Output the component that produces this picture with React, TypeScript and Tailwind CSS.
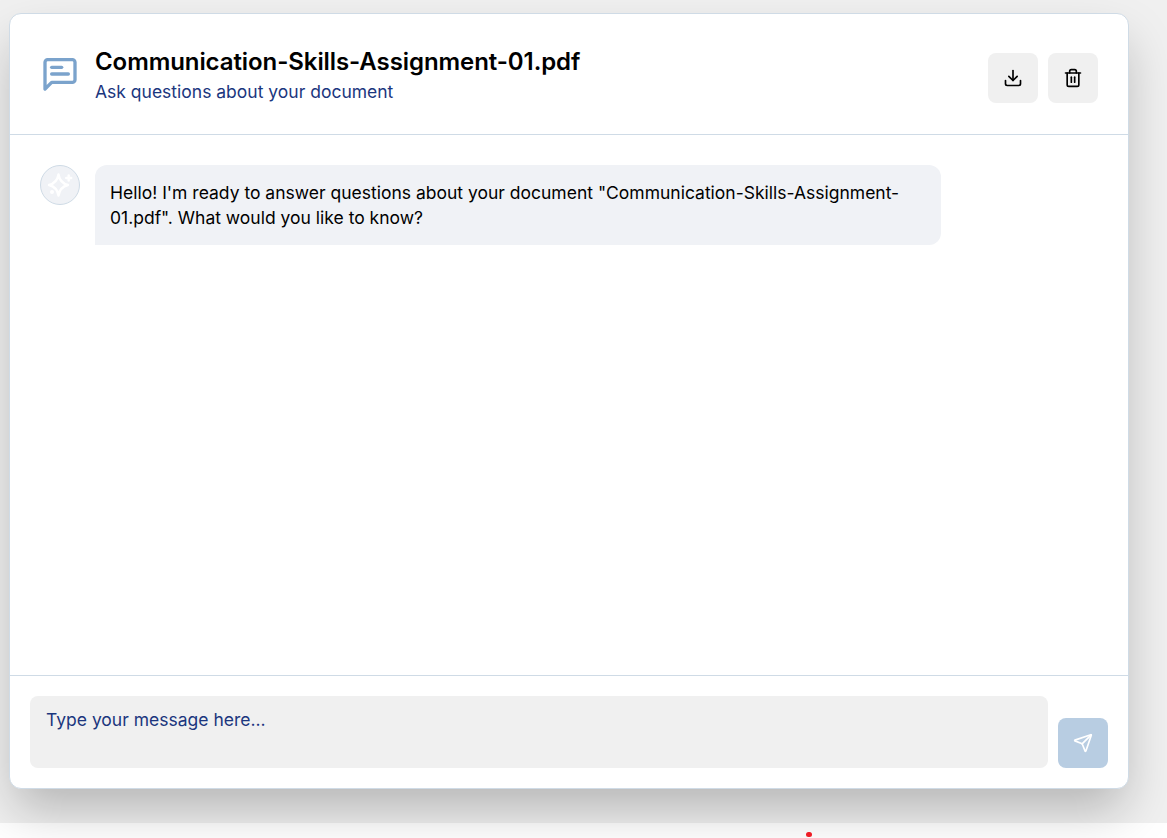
import { Download, Send, Trash2 } from "lucide-react"

function ChatIcon() {
  return (
    <svg viewBox="0 0 24 24" fill="none" stroke="#7ba3cc" strokeWidth="2" strokeLinecap="round" strokeLinejoin="round" className="h-10 w-10 shrink-0">
      <path d="M3 5a1.6 1.6 0 0 1 1.6-1.6h14.8A1.6 1.6 0 0 1 21 5v10.4a1.6 1.6 0 0 1-1.6 1.6H7l-4 4z" />
      <path d="M7 8h6" />
      <path d="M7 12h10" />
    </svg>
  )
}

function StarIcon() {
  return (
    <svg viewBox="0 0 38 38" fill="none" stroke="white" strokeWidth="2.4" strokeLinecap="round" strokeLinejoin="round" className="h-[38px] w-[38px]">
      <path d="M17.500 8.500c1 6 3.500 9 9.500 10.500-6 1.500-8.500 4.500-9.500 10.500-1-6-3.500-9-9.500-10.500 6-1.500 8.500-4.500 9.500-10.500z" />
      <path d="M27.700 9.500v5" />
      <path d="M25.200 12h5" />
      <circle cx="11" cy="26" r="0.800" fill="white" />
    </svg>
  )
}

export default function App() {
  return (
    <div className="relative h-[838px] bg-white font-['Inter',sans-serif]">
      <div className="h-[823px] bg-[#f0f0f0] pl-[9px] pt-[13px]">
        <div className="flex h-[776px] w-[1120px] flex-col overflow-hidden rounded-xl border border-[#cfdbe6] bg-white shadow-[0_25px_50px_-5px_rgba(0,0,0,0.25)]">
          <header className="flex h-[121px] shrink-0 items-center justify-between border-b border-[#cfdbe6] pl-[30px] pr-[30px]">
            <div className="flex items-center gap-[15px]">
              <ChatIcon />
              <div>
                <h1 className="text-2xl leading-[36px] font-semibold tracking-[-0.08px] text-black">Communication-Skills-Assignment-01.pdf</h1>
                <p className="text-[17.5px] leading-[24px] text-[#1b367e]">Ask questions about your document</p>
              </div>
            </div>
            <div className="mt-2 flex gap-[10px]">
              <button className="flex h-[50px] w-[50px] items-center justify-center rounded-lg bg-[#f0f0f0] text-black">
                <Download size={20} />
              </button>
              <button className="flex h-[50px] w-[50px] items-center justify-center rounded-lg bg-[#f0f0f0] text-black">
                <Trash2 size={20} />
              </button>
            </div>
          </header>

          <main className="flex flex-1 items-start gap-[15px] p-[30px]">
            <div className="flex h-10 w-10 shrink-0 items-center justify-center rounded-full border border-[#cfdbe6] bg-[#f0f2f6]">
              <StarIcon />
            </div>
            <div className="w-[846px] rounded-xl rounded-bl-none bg-[#f0f2f6] px-[15px] py-[15px] text-[17.5px] leading-[25px] text-black">
              Hello! I'm ready to answer questions about your document "Communication-Skills-Assignment-01.pdf". What would you like to know?
            </div>
          </main>

          <footer className="flex shrink-0 items-end gap-[10px] border-t border-[#cfdbe6] p-5">
            <textarea
              placeholder="Type your message here..."
              className="h-[72px] flex-1 resize-none rounded-lg bg-[#f0f0f0] px-4 py-[11px] text-[17.5px] leading-[25px] outline-none placeholder:text-[#1b367e]"
            />
            <button className="flex h-[50px] w-[50px] items-center justify-center rounded-lg bg-[#b8cde2] text-white">
              <Send size={20} />
            </button>
          </footer>
        </div>
      </div>
      <div className="absolute left-[806px] top-[832px] h-[5px] w-[6px] rounded-full bg-[#ee1c25]" />
    </div>
  )
}
